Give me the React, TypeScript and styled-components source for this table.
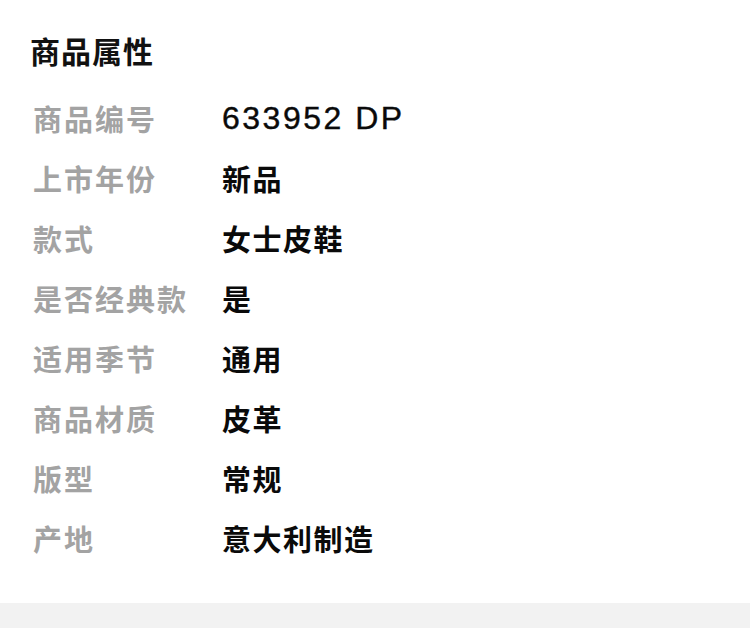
import React from 'react';
import styled, { createGlobalStyle } from 'styled-components';

const GlobalStyle = createGlobalStyle`
  html, body {
    margin: 0;
    padding: 0;
    background: #f2f2f2;
    font-family: "Noto Sans CJK SC", "Noto Sans", sans-serif;
  }
`;

const attrs = [
  { label: '商品编号', value: '633952 DP', latin: true },
  { label: '上市年份', value: '新品' },
  { label: '款式', value: '女士皮鞋' },
  { label: '是否经典款', value: '是' },
  { label: '适用季节', value: '通用' },
  { label: '商品材质', value: '皮革' },
  { label: '版型', value: '常规' },
  { label: '产地', value: '意大利制造' },
];

export default function App() {
  return (
    <>
      <GlobalStyle />
      <Card>
        <Title>商品属性</Title>
        <List>
          {attrs.map(a => (
            <Row key={a.label}>
              <Label>{a.label}</Label>
              <Value $latin={a.latin}>{a.value}</Value>
            </Row>
          ))}
        </List>
      </Card>
      <Footer />
    </>
  );
}

const Card = styled.section`
  background: #ffffff;
  padding: 22px 32px 35px 30px;
`;
const Title = styled.h2`
  margin: 0;
  height: 56px;
  line-height: 56px;
  font-size: 30px;
  font-weight: 700;
  letter-spacing: 1px;
  color: #111111;
`;
const List = styled.div`
  display: flex;
  flex-direction: column;
  margin-top: 10px;
`;
const Row = styled.div`
  display: grid;
  grid-template-columns: 189px 1fr;
  align-items: center;
  height: 60px;
  padding-left: 3px;
`;
const Label = styled.span`
  font-size: 29px;
  font-weight: 700;
  letter-spacing: 2px;
  color: #a3a3a3;
  white-space: nowrap;
`;
const Value = styled.span<{ $latin?: boolean }>`
  font-family: ${p => (p.$latin ? '"Liberation Sans", "Noto Sans", sans-serif' : '"Noto Sans CJK SC", sans-serif')};
  font-size: ${p => (p.$latin ? '32px' : '29px')};
  font-weight: ${p => (p.$latin ? 400 : 700)};
  letter-spacing: ${p => (p.$latin ? '2.5px' : '1.5px')};
  -webkit-text-stroke: ${p => (p.$latin ? '0.4px #0a0a0a' : '0')};
  color: #0a0a0a;
`;
const Footer = styled.div`
  height: 40px;
  background: #f2f2f2;
`;
